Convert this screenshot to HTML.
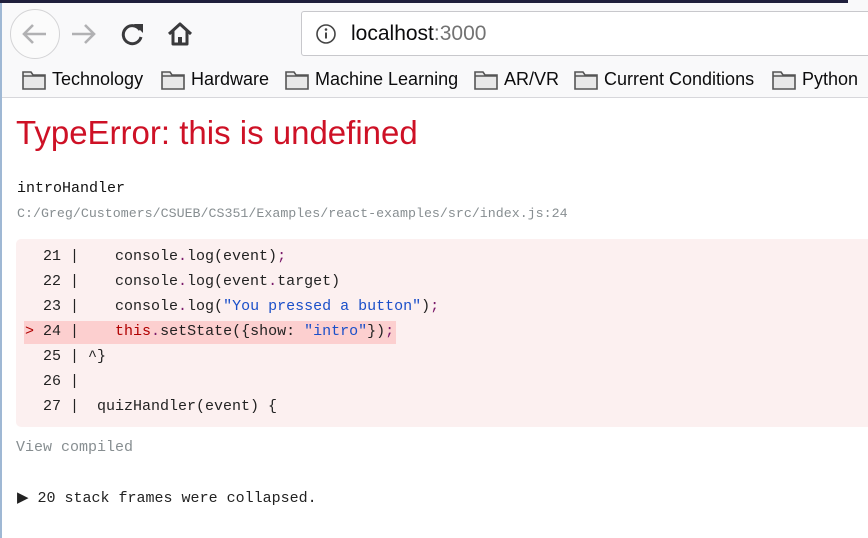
<!DOCTYPE html>
<html><head><style>
*{margin:0;padding:0;box-sizing:border-box}
body{width:868px;height:538px;overflow:hidden;background:#fff;font-family:"Liberation Sans",sans-serif;position:relative}
.a{position:absolute}
.chrome{left:0;top:0;width:868px;height:98px;background:#f9f9fa;border-bottom:1px solid #d7d7db}
.strip{left:0;top:0;width:848px;height:3px;background:#1f1f3c}
.url{left:301px;top:11px;width:580px;height:45px;background:#fff;border:1px solid #c8c8cc;border-radius:3px}
.bm{top:69px;font-size:18px;color:#0c0c0d;display:flex;align-items:center;white-space:nowrap}
.bm svg{margin-right:6px}
.mono{font-family:"Liberation Mono",monospace;font-size:15px;white-space:pre}
.code{left:16px;top:239px;width:860px;height:188px;background:#fcf0f0;border-radius:5px}
.ln{left:25px;height:24px;line-height:24px;color:#222}
.s{color:#1a4fc9}.k{color:#b00000}.p{color:#7a1a6a}
</style></head><body>
<div class="a chrome"></div>
<div class="a strip"></div>
<div class="a" style="left:0;top:3px;width:2px;height:535px;background:#9fb8d4"></div>
<div class="a" style="left:10px;top:9px;width:50px;height:50px;border:1px solid #d4d4d6;border-radius:50%;background:#fbfbfb"></div>
<svg class="a" style="left:20px;top:22px" width="28" height="24" viewBox="0 0 28 24"><path d="M26 12H4M13 3L4 12l9 9" fill="none" stroke="#b1b1b3" stroke-width="2.6"/></svg>
<svg class="a" style="left:70px;top:22px" width="28" height="24" viewBox="0 0 28 24"><path d="M2 12h22M15 3l9 9-9 9" fill="none" stroke="#b1b1b3" stroke-width="2.6"/></svg>
<svg class="a" style="left:120px;top:21px" width="26" height="26" viewBox="0 0 26 26"><path d="M20 9A9 9 0 1 0 21 16" fill="none" stroke="#3a3a3c" stroke-width="3"/><path d="M14 3h9v9z" fill="#3a3a3c"/></svg>
<svg class="a" style="left:166px;top:20px" width="28" height="28" viewBox="0 0 28 28"><path d="M3 14L14 4l11 10M7 11v13h14V11" fill="none" stroke="#3a3a3c" stroke-width="3" stroke-linejoin="round"/><rect x="12" y="17" width="4" height="7" fill="#3a3a3c"/></svg>
<div class="a url"></div>
<svg class="a" style="left:315px;top:23px" width="22" height="22" viewBox="0 0 22 22"><circle cx="11" cy="11" r="9" fill="none" stroke="#444" stroke-width="1.6"/><circle cx="11" cy="6.5" r="1.3" fill="#444"/><path d="M11 9.5v6" stroke="#444" stroke-width="2"/></svg>
<div class="a" style="left:351px;top:22px;font-size:21px;color:#0c0c0d">localhost<span style="color:#737373">:3000</span></div>
<div class="a bm" style="left:22px"><svg width="24" height="20" viewBox="0 0 24 20"><path d="M1 2h8l2 3h12v14H1z" fill="#e8e8e8" stroke="#555" stroke-width="1.6"/><path d="M1 6h22" stroke="#555" stroke-width="1.4"/></svg>Technology</div>
<div class="a bm" style="left:161px"><svg width="24" height="20" viewBox="0 0 24 20"><path d="M1 2h8l2 3h12v14H1z" fill="#e8e8e8" stroke="#555" stroke-width="1.6"/><path d="M1 6h22" stroke="#555" stroke-width="1.4"/></svg>Hardware</div>
<div class="a bm" style="left:285px"><svg width="24" height="20" viewBox="0 0 24 20"><path d="M1 2h8l2 3h12v14H1z" fill="#e8e8e8" stroke="#555" stroke-width="1.6"/><path d="M1 6h22" stroke="#555" stroke-width="1.4"/></svg>Machine Learning</div>
<div class="a bm" style="left:474px"><svg width="24" height="20" viewBox="0 0 24 20"><path d="M1 2h8l2 3h12v14H1z" fill="#e8e8e8" stroke="#555" stroke-width="1.6"/><path d="M1 6h22" stroke="#555" stroke-width="1.4"/></svg>AR/VR</div>
<div class="a bm" style="left:574px"><svg width="24" height="20" viewBox="0 0 24 20"><path d="M1 2h8l2 3h12v14H1z" fill="#e8e8e8" stroke="#555" stroke-width="1.6"/><path d="M1 6h22" stroke="#555" stroke-width="1.4"/></svg>Current Conditions</div>
<div class="a bm" style="left:772px"><svg width="24" height="20" viewBox="0 0 24 20"><path d="M1 2h8l2 3h12v14H1z" fill="#e8e8e8" stroke="#555" stroke-width="1.6"/><path d="M1 6h22" stroke="#555" stroke-width="1.4"/></svg>Python</div>

<div class="a" style="left:16px;top:114px;font-size:33px;color:#ce1126;white-space:nowrap">TypeError: this is undefined</div>
<div class="a mono" style="left:17px;top:180px;color:#111">introHandler</div>
<div class="a mono" style="left:17px;top:206px;font-size:13.3px;color:#878e91">C:/Greg/Customers/CSUEB/CS351/Examples/react-examples/src/index.js:24</div>
<div class="a code"></div>
<div class="a" style="left:24px;top:321px;width:372px;height:23px;background:#fccfcf"></div>
<div class="a mono ln" style="top:245px">  21 |    console<span class="p">.</span>log(event)<span class="p">;</span></div>
<div class="a mono ln" style="top:270px">  22 |    console<span class="p">.</span>log(event<span class="p">.</span>target)</div>
<div class="a mono ln" style="top:295px">  23 |    console<span class="p">.</span>log(<span class="s">"You pressed a button"</span>)<span class="p">;</span></div>
<div class="a mono ln" style="top:320px"><span class="k">&gt;</span> 24 |    <span class="k">this</span><span class="p">.</span>setState({show: <span class="s">"intro"</span>})<span class="p">;</span></div>
<div class="a mono ln" style="top:345px">  25 | ^}</div>
<div class="a mono ln" style="top:370px">  26 |</div>
<div class="a mono ln" style="top:395px">  27 |  quizHandler(event) {</div>
<div class="a mono" style="left:16px;top:439px;color:#878e91">View compiled</div>
<div class="a mono" style="left:17px;top:488px;color:#222">▶ 20 stack frames were collapsed.</div>
</body></html>
